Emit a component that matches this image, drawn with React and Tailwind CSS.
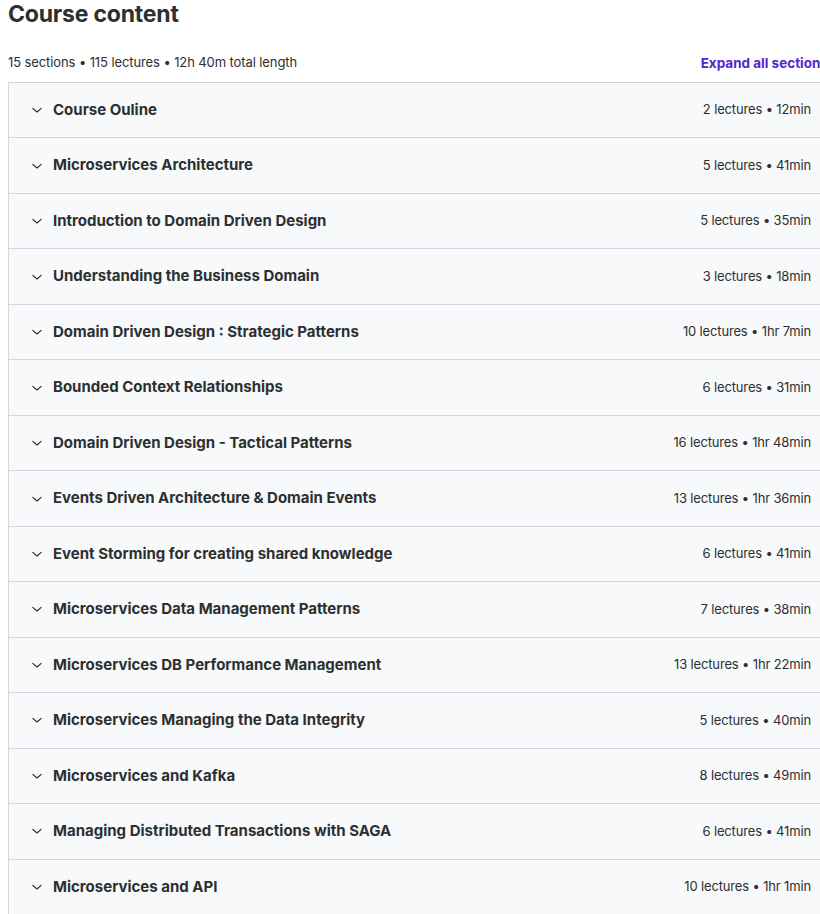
import React from "react";

const sections = [
  ["Course Ouline", "2 lectures • 12min"],
  ["Microservices Architecture", "5 lectures • 41min"],
  ["Introduction to Domain Driven Design", "5 lectures • 35min"],
  ["Understanding the Business Domain", "3 lectures • 18min"],
  ["Domain Driven Design : Strategic Patterns", "10 lectures • 1hr 7min"],
  ["Bounded Context Relationships", "6 lectures • 31min"],
  ["Domain Driven Design - Tactical Patterns", "16 lectures • 1hr 48min"],
  ["Events Driven Architecture & Domain Events", "13 lectures • 1hr 36min"],
  ["Event Storming for creating shared knowledge", "6 lectures • 41min"],
  ["Microservices Data Management Patterns", "7 lectures • 38min"],
  ["Microservices DB Performance Management", "13 lectures • 1hr 22min"],
  ["Microservices Managing the Data Integrity", "5 lectures • 40min"],
  ["Microservices and Kafka", "8 lectures • 49min"],
  ["Managing Distributed Transactions with SAGA", "6 lectures • 41min"],
  ["Microservices and API", "10 lectures • 1hr 1min"],
];

function Chevron() {
  return (
    <svg width="12" height="12" viewBox="0 0 12 12" fill="none" className="shrink-0">
      <path d="M1.8 4.4 L6 8 L10.2 4.4" stroke="#2d2f31" strokeWidth="1.2" strokeLinecap="round" strokeLinejoin="round" />
    </svg>
  );
}

export default function App() {
  return (
    <div className="w-[820px] h-[914px] overflow-hidden bg-white text-[#2d2f31] font-['Inter',sans-serif]">
      <div className="w-[836px] pl-2">
        <h2 className="text-[23px] font-bold leading-[26px] mt-[1px] tracking-[-0.2px]">Course content</h2>
        <div className="flex items-center justify-between h-[18px] mt-[27px] pr-[8px]">
          <span className="text-[13px] tracking-[-0.1px]">15 sections • 115 lectures • 12h 40m total length</span>
          <span className="text-[13.5px] font-bold text-[#5624d0]">Expand all sections</span>
        </div>
        <div className="mt-[10px] border-t border-l border-[#d1d7dc]">
          {sections.map(([title, meta]) => (
            <div
              key={title}
              className="h-[55.47px] flex items-center bg-[#f7f9fa] border-b border-[#d1d7dc] pl-[22px] pr-[25px]"
            >
              <Chevron />
              <span className="ml-[10px] text-[15px] font-bold flex-1">{title}</span>
              <span className="text-[13px] tracking-[-0.15px]">{meta}</span>
            </div>
          ))}
        </div>
      </div>
    </div>
  );
}
